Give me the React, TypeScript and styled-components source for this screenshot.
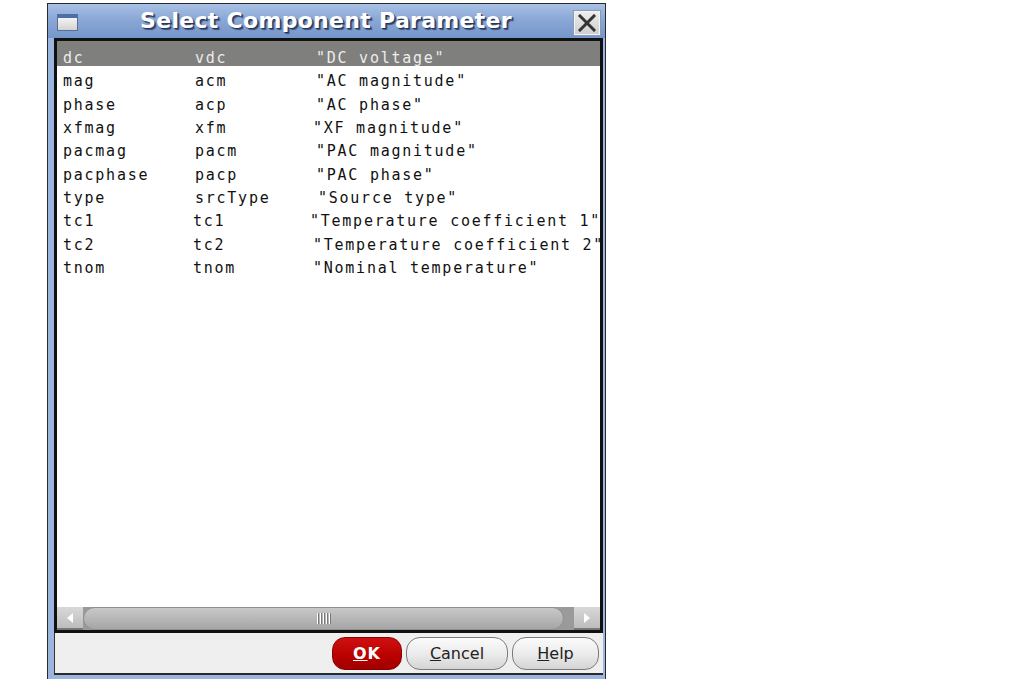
import styled, { createGlobalStyle } from "styled-components";

const GlobalStyle = createGlobalStyle`
  html, body {
    margin: 0;
    padding: 0;
    background: #ffffff;
  }
  body {
    font-family: "DejaVu Sans", sans-serif;
  }
`;

interface Param {
  name: string;
  key: string;
  label: string;
  keyShift?: number;
  labelShift?: number;
}

const params: Param[] = [
  { name: "dc", key: "vdc", label: '"DC voltage"' },
  { name: "mag", key: "acm", label: '"AC magnitude"' },
  { name: "phase", key: "acp", label: '"AC phase"' },
  { name: "xfmag", key: "xfm", label: '"XF magnitude"', labelShift: -3 },
  { name: "pacmag", key: "pacm", label: '"PAC magnitude"' },
  { name: "pacphase", key: "pacp", label: '"PAC phase"' },
  { name: "type", key: "srcType", label: '"Source type"', labelShift: 2 },
  { name: "tc1", key: "tc1", label: '"Temperature coefficient 1"', keyShift: -2, labelShift: -6 },
  { name: "tc2", key: "tc2", label: '"Temperature coefficient 2"', keyShift: -2, labelShift: -3 },
  { name: "tnom", key: "tnom", label: '"Nominal temperature"', keyShift: -2, labelShift: -3 },
];

export default function App() {
  return (
    <>
      <GlobalStyle />
      <Page>
        <Window>
          <TitleBar>
            <WindowIcon />
            <Title>Select Component Parameter</Title>
            <CloseButton>
              <svg width="18" height="18" viewBox="0 0 18 18">
                <path d="M2 2 L16 16 M16 2 L2 16" stroke="#333" strokeWidth="3" strokeLinecap="square" />
              </svg>
            </CloseButton>
          </TitleBar>
          <ListFrame>
            <List>
              {params.map((p, idx) => (
                <Row key={p.name} $selected={idx === 0}>
                  <Cell>{p.name}</Cell>
                  <Cell $shift={p.keyShift ?? 0}>{p.key}</Cell>
                  <Cell $shift={p.labelShift ?? 0}>{p.label}</Cell>
                </Row>
              ))}
            </List>
            <HScroll>
              <ArrowButton>
                <svg width="10" height="12" viewBox="0 0 10 12">
                  <path d="M8 1 L2 6 L8 11 Z" fill="#ffffff" />
                </svg>
              </ArrowButton>
              <Track>
                <Thumb>
                  <Grip>
                    <i />
                    <i />
                    <i />
                    <i />
                    <i />
                  </Grip>
                </Thumb>
              </Track>
              <ArrowButton>
                <svg width="10" height="12" viewBox="0 0 10 12">
                  <path d="M2 1 L8 6 L2 11 Z" fill="#ffffff" />
                </svg>
              </ArrowButton>
            </HScroll>
          </ListFrame>
          <ButtonBar>
            <OkButton>
              <u>O</u>K
            </OkButton>
            <PillButton $width={102}>
              <u>C</u>ancel
            </PillButton>
            <PillButton $width={87}>
              <u>H</u>elp
            </PillButton>
          </ButtonBar>
        </Window>
      </Page>
    </>
  );
}

const Page = styled.div`
  padding: 3px 0 0 47px;
`;

const Window = styled.div`
  width: 549px;
  height: 671px;
  display: flex;
  flex-direction: column;
  border: 1px solid #2a2a2a;
  background: #9bb6de;
  padding: 0 2px 4px 6px;
  box-sizing: content-box;
`;

const TitleBar = styled.div`
  height: 34px;
  display: flex;
  align-items: center;
  margin: 0 -2px 0 -6px;
  padding: 0 5px 0 9px;
  background: linear-gradient(#a9c1e4 0%, #8aa8d6 45%, #7596cb 100%);
`;

const WindowIcon = styled.div`
  width: 21px;
  height: 17px;
  box-sizing: border-box;
  border: 1px solid #5c6f92;
  border-top: 4px solid #4d6ea6;
  background: linear-gradient(#f4f4f4, #d2d2d2);
  margin-top: 2px;
`;

const Title = styled.div`
  flex: 1;
  text-align: center;
  color: #ffffff;
  font-family: "DejaVu Sans", sans-serif;
  font-weight: bold;
  font-size: 22px;
  letter-spacing: 0.3px;
  text-shadow: 1px 1px 0 #27375a, 2px 2px 1px #3b4e78;
  margin-top: -1px;
`;

const CloseButton = styled.div`
  width: 26px;
  height: 24px;
  box-sizing: border-box;
  display: flex;
  align-items: center;
  justify-content: center;
  background: linear-gradient(#ececec, #cfcfcf);
  border: 1px solid #f4f4f4;
  outline: 1px solid #8a9bb8;
  margin-top: 3px;
`;

const ListFrame = styled.div`
  flex: 1;
  display: flex;
  flex-direction: column;
  border: 3px solid #111111;
  background: #ffffff;
  overflow: hidden;
  min-height: 0;
`;

const List = styled.div`
  flex: 1;
  overflow: hidden;
  background: #ffffff;
`;

const Row = styled.div<{ $selected: boolean }>`
  display: grid;
  grid-template-columns: 132px 121px 1fr;
  height: 23.35px;
  padding: 7px 0 0 6px;
  box-sizing: border-box;
  align-items: start;
  white-space: nowrap;
  font-family: "DejaVu Sans Mono", monospace;
  font-size: 15px;
  letter-spacing: 1.75px;
  line-height: 20px;
  color: ${(p) => (p.$selected ? "#ececec" : "#111111")};
  background: ${(p) => (p.$selected ? "#7f7f7d" : "transparent")};
  box-shadow: ${(p) => (p.$selected ? "0 2px 0 #7f7f7d" : "none")};
`;

const Cell = styled.span<{ $shift?: number }>`
  margin-left: ${(p) => p.$shift ?? 0}px;
`;

const HScroll = styled.div`
  height: 23px;
  display: flex;
  background: #8e8e8e;
`;

const ArrowButton = styled.div`
  width: 26px;
  display: flex;
  align-items: center;
  justify-content: center;
  background: linear-gradient(#d8d8d8, #bdbdbd);
  border-bottom: 2px solid #777;
  box-sizing: border-box;
`;

const Track = styled.div`
  flex: 1;
  padding-right: 10px;
  background: #9a9a9a;
`;

const Thumb = styled.div`
  height: 100%;
  box-sizing: border-box;
  border-radius: 12px;
  background: linear-gradient(#c8c8c8, #b3b3b3 60%, #a6a6a6);
  border: 1px solid #8f8f8f;
  display: flex;
  align-items: center;
  justify-content: center;
`;

const Grip = styled.div`
  display: flex;
  gap: 2px;
  i {
    display: block;
    width: 1px;
    height: 11px;
    background: #ffffff;
    box-shadow: 1px 0 0 #7a7a7a;
  }
`;

const ButtonBar = styled.div`
  height: 40px;
  display: flex;
  align-items: center;
  justify-content: flex-end;
  gap: 4px;
  padding-right: 4px;
  background: #efefef;
  border-left: 1px solid #333;
  border-bottom: 2px solid #2a2a2a;
`;

const OkButton = styled.div`
  width: 70px;
  height: 33px;
  box-sizing: border-box;
  border-radius: 13px;
  display: flex;
  align-items: center;
  justify-content: center;
  background: linear-gradient(#d01010, #b80000 60%, #a00000);
  border: 1px solid #8c0000;
  color: #ffffff;
  font-family: "DejaVu Sans", sans-serif;
  font-weight: bold;
  font-size: 16px;
  letter-spacing: 1px;
`;

const PillButton = styled.div<{ $width: number }>`
  width: ${(p) => p.$width}px;
  height: 33px;
  box-sizing: border-box;
  border-radius: 14px;
  display: flex;
  align-items: center;
  justify-content: center;
  background: linear-gradient(#fbfbfb, #eaeaea 55%, #d4d4d4);
  border: 1px solid #7a7a7a;
  color: #222222;
  font-family: "DejaVu Sans", sans-serif;
  font-size: 16px;
`;
